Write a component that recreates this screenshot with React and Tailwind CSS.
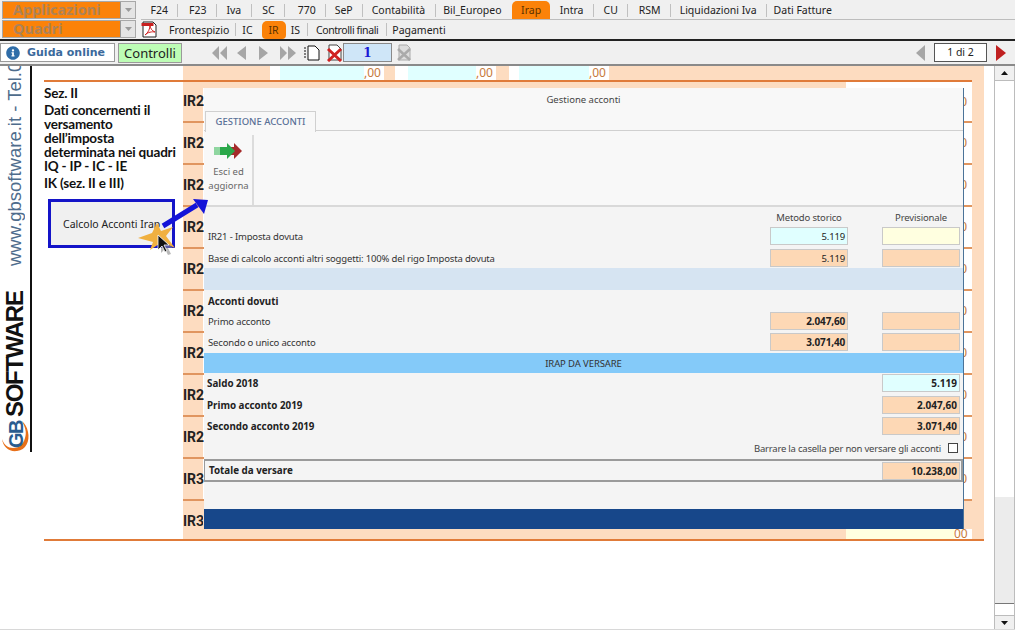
import { FaInfoCircle } from 'react-icons/fa';

const ui = { fontFamily: '"Noto Sans", sans-serif' };
const arial = { fontFamily: '"Liberation Sans", sans-serif' };
const roboto = { fontFamily: 'Roboto, sans-serif' };

const topTabs = [
  { label: 'F24', cls: '', sep: true },
  { label: 'F23', cls: 'ml-[1px]', sep: true },
  { label: 'Iva', cls: '', sep: true },
  { label: 'SC', cls: 'ml-[1px]', sep: true },
  { label: '770', cls: 'ml-[3px]', sep: true },
  { label: 'SeP', cls: '-ml-[1px]', sep: true },
  { label: 'Contabilità', cls: '-ml-[1px]', sep: true },
  { label: 'Bil_Europeo', cls: '-ml-[2px]' },
  { label: 'Irap', cls: 'ml-[1px]', active: true },
  { label: 'Intra', cls: '', sep: true },
  { label: 'CU', cls: '', sep: true },
  { label: 'RSM', cls: 'ml-[1px]', sep: true },
  { label: 'Liquidazioni Iva', cls: '-ml-[1px]', sep: true },
  { label: 'Dati Fatture', cls: '-ml-[3px]' },
];
const subTabs = [
  { label: 'Frontespizio', cls: 'pr-[6px] pl-[7px]', sep: true },
  { label: 'IC', cls: 'pr-[9px] pl-[6px]' },
  { label: 'IR', cls: 'rounded-t-[5px] rounded-b-[4px] bg-[#fb8209] px-[7px] text-[#5b3200]' },
  { label: 'IS', cls: 'pr-[7px] pl-[5px]', sep: true },
  { label: 'Controlli finali', cls: 'pr-[8px] pl-[8px] tracking-[-0.4px]', sep: true },
  { label: 'Pagamenti', cls: 'pl-[5px]' },
];
const sideLines = ['Dati concernenti il', 'versamento', 'dell’imposta', 'determinata nei quadri', 'IQ - IP - IC - IE'];
const rowLabels = ['IR21', 'IR22', 'IR23', 'IR24', 'IR25', 'IR26', 'IR27', 'IR28', 'IR29', 'IR30'];

function Combo({ label }) {
  return (
    <div className="flex h-[18px] w-[134px] border border-[#a8a8a8] bg-[#fb8209]">
      <span className="flex-1 pl-[10px] text-[14.5px] leading-[15px] font-bold text-[#ad8258]">{label}</span>
      <span className="flex w-[15px] items-center justify-center border-l border-[#999] bg-[#e4e4e4]">
        <svg width="7" height="4"><path d="M0 0h7L3.5 4z" fill="#9a9a9a" /></svg>
      </span>
    </div>
  );
}

function Field({ value = '', tone = 'peach', bold }) {
  const tones = { peach: 'bg-[#fdd8b5]', cyan: 'bg-[#e0ffff]', yellow: 'bg-[#ffffe0]' };
  return (
    <div className={`h-[18px] w-[78px] border border-[#c9c9c9] pr-[2px] text-right leading-[17px] text-[#222] ${tones[tone]} ${bold ? 'text-[10px] font-bold' : 'text-[9.5px]'}`}>
      {value}
    </div>
  );
}

function FormRow({ label, a, b, toneA, toneB, bold, className = '' }) {
  return (
    <div className={`flex h-[18px] items-center pr-[3px] pl-[4px] text-[9.5px] tracking-[-0.16px] text-[#333] ${className}`}>
      <span className="flex-1 pt-[2px]">{label}</span>
      <Field value={a} tone={toneA} bold={bold} />
      <div className="ml-[34px]">
        <Field value={b} tone={toneB} bold={bold} />
      </div>
    </div>
  );
}

function TotalRow({ label, value, tone, className = '' }) {
  return (
    <div className={`flex h-[18px] items-center pr-[3px] pl-[3px] text-[9.8px] font-bold text-[#222] ${className}`}>
      <span className="flex-1 pt-[2px]">{label}</span>
      <Field value={value} tone={tone} bold />
    </div>
  );
}

function Dialog() {
  return (
    <div className="absolute top-[22px] left-[172px] h-[441px] w-[760px] border-r border-[#4b7398] bg-[#f4f4f4]" style={ui}>
      <div className="bg-[#f8f8f8]">
        <div className="h-[23px] pt-[4px] text-center text-[9.5px] leading-[16px] text-[#444]">Gestione acconti</div>
        <div className="flex h-[20px] border-b border-[#d0d0d0]">
          <div className="ml-px h-[21px] w-[111px] border border-b-0 border-[#d0d0d0] bg-[#f8f8f8] text-center text-[9.5px] leading-[19px] font-medium text-[#5a7097]">
            GESTIONE ACCONTI
          </div>
        </div>
        <div className="flex h-[76px] border-b-2 border-[#d9d9d9] pt-[4px]">
          <div className="w-[50px] border-r-2 border-[#dcdcdc] pt-[8px] text-center text-[9.5px] leading-[14px] text-[#666]">
            <svg className="mx-auto" width="28" height="16" viewBox="0 0 28 16">
              <rect x="0" y="4" width="12" height="8" fill="#8fd6a0" />
              <path d="M18 0l8 8-8 8v-4h-8V4h8z" fill="#a52a2a" transform="translate(2 0)" />
              <path d="M13 0l8 8-8 8v-4H6V4h7z" fill="#2ba84a" />
            </svg>
            <div className="mt-[6px] pl-px">Esci ed<br />aggiorna</div>
          </div>
        </div>
      </div>

      <div className="flex h-[20px] items-center pt-[2px] pr-[3px] text-center text-[9.5px] tracking-[-0.16px] text-[#444]">
        <span className="ml-auto w-[78px]">Metodo storico</span>
        <span className="ml-[34px] w-[78px]">Previsionale</span>
      </div>
      <FormRow label="IR21 - Imposta dovuta" a="5.119" toneA="cyan" toneB="yellow" />
      <FormRow label="Base di calcolo acconti altri soggetti: 100% del rigo Imposta dovuta" a="5.119" className="mt-[4px]" />
      <div className="mt-[1px] h-[22px] bg-[#d6e4f2]" />
      <div className="h-[22px] pt-[4px] pl-[4px] text-[9.8px] leading-[16px] font-bold text-[#222]">Acconti dovuti</div>
      <FormRow label="Primo acconto" a="2.047,60" bold />
      <FormRow label="Secondo o unico acconto" a="3.071,40" bold className="mt-[3px]" />
      <div className="mt-[2px] h-[20px] bg-[#84caf9] pt-px text-center text-[9.5px] leading-[20px] tracking-[-0.1px] text-[#333]">IRAP DA VERSARE</div>
      <TotalRow label="Saldo 2018" value="5.119" tone="cyan" className="mt-[1px]" />
      <TotalRow label="Primo acconto 2019" value="2.047,60" className="mt-[4px]" />
      <TotalRow label="Secondo acconto 2019" value="3.071,40" className="mt-[3px]" />
      <div className="mt-[4px] flex h-[18px] items-center justify-end pr-[5px] text-[9.5px] tracking-[-0.22px] text-[#444]">
        <span className="pt-[2px]">Barrare la casella per non versare gli acconti</span>
        <span className="ml-[7px] h-[10px] w-[10px] border border-[#444] bg-white" />
      </div>
      <div className="mt-[2px] flex h-[23px] items-center border-y-2 border-r-2 border-l border-[#9a9a9a] pr-[1px] pl-[4px] text-[9.8px] font-bold text-[#222]">
        <span className="flex-1 pt-[2px]">Totale da versare</span>
        <Field value="10.238,00" bold />
      </div>
      <div className="mt-[27px] h-[20px] bg-[#17478a]" />
    </div>
  );
}

function NavIcons() {
  const grey = '#a6a6a6';
  return (
    <div className="ml-[29px] flex items-center">
      <svg width="132" height="18" viewBox="0 0 132 18">
        <path d="M8 2v14L1 9zM16 2v14L9 9zM35 2v14l-9-7zM48 2v14l9-7zM69 2v14l7-7zM77 2v14l8-7z" fill={grey} />
        <path d="M97 2h7l4 4v10H97z" fill="#fff" stroke="#111" />
        <path d="M93 4h2M93 7h2M93 10h2M93 13h2" stroke="#111" />
        <path d="M118 1h8l4 4v11h-12z" fill="#fff" stroke="#444" />
        <path d="M117 5l13 12M130 5l-13 12" stroke="#d02020" strokeWidth="3" />
      </svg>
      <div className="h-[19px] w-[49px] border border-[#8a8a8a] bg-[#cfe6f8] text-center text-[12px] leading-[19px] font-bold text-[#1a1ad6]" style={{ fontFamily: '"DejaVu Serif", serif' }}>1</div>
      <svg className="ml-[5px]" width="15" height="17" viewBox="0 0 15 17">
        <path d="M2 1h8l3 3v12H2z" fill="#ddd" stroke="#aaa" />
        <path d="M1 5l12 11M13 5L1 16" stroke="#aaa" strokeWidth="2.5" />
      </svg>
    </div>
  );
}

function Sidebar() {
  return (
    <div className="flex h-[386px] w-[32px] shrink-0 flex-col border-r-2 border-[#111]">
      <div className="h-[200px] shrink-0 rotate-180 overflow-hidden text-[18.5px] leading-[30px] whitespace-nowrap text-[#4e6c8c] [writing-mode:vertical-rl]" style={arial}>
        www.gbsoftware.it - Tel.0
      </div>
      <div className="mt-[24px] flex h-[127px] w-[30px] shrink-0 rotate-180 items-center justify-start text-[24px] leading-[30px] font-bold tracking-[-1.3px] whitespace-nowrap text-[#111] [writing-mode:vertical-rl]" style={arial}>
        SOFTWARE
      </div>
      <svg className="shrink-0" width="30" height="35" viewBox="0 0 30 35">
        <path d="M2 22c1 8 7 13 15 12 9-1 13-10 11-19-1-5-3-8-6-11 3 6 5 11 3 17-2 7-6 10-12 10-5 0-9-3-11-9z" fill="#e8701a" />
        <text transform="translate(23 31) rotate(-90)" fontSize="20" fontWeight="700" letterSpacing="-1.5" fill="#2a5c8f" style={arial}>GB</text>
      </svg>
    </div>
  );
}

function TopStrip() {
  return (
    <div className="flex h-[14px]">
      <div className="w-[139px] shrink-0" />
      <div className="flex flex-1 bg-[#fddcc0]">
        <div className="ml-[87px] w-[10px] bg-white" />
        <div className="w-[84px] bg-[#e0ffff]" />
        <div className="w-[20px] bg-white text-[12px] leading-[14px] text-[#c77a3c]">,00</div>
        <div className="ml-[11px] w-[13px] bg-white" />
        <div className="w-[68px] bg-[#e0ffff]" />
        <div className="w-[20px] bg-white text-[12px] leading-[14px] text-[#c77a3c]">,00</div>
        <div className="ml-[13px] w-[10px] bg-white" />
        <div className="w-[70px] bg-[#e0ffff]" />
        <div className="w-[20px] bg-white text-[12px] leading-[14px] text-[#c77a3c]">,00</div>
      </div>
    </div>
  );
}

function Pointer() {
  return (
    <svg className="pointer-events-none absolute top-[122px] left-[100px]" width="90" height="70" viewBox="0 0 90 70">
      <path d="M31 38L65 17" stroke="#1414d8" strokeWidth="5" />
      <path d="M76 12L61 11l11 15z" fill="#1414d8" />
      <path d="M6 50l14-5 5-10 4 8 12-4-7 9 9 12-13-6-12 8 3-8z" fill="#f0b040" />
      <path d="M29 50v15l4-4 3 6 3-1-3-6h5z" fill="#888" opacity="0.6" />
      <path d="M26 47v15l4-4 3 6 2-1-3-6h5z" fill="#111" stroke="#fff" strokeWidth="0.8" />
    </svg>
  );
}

function Form() {
  return (
    <div className="relative flex-1 pl-[12px]" style={ui}>
      <div className="w-[940px]">
        <TopStrip />
        <div className="flex">
          <div className="h-[2px] flex-1 bg-[#e07b39]" />
          <div className="w-[12px] bg-[#fddcc0]" />
        </div>
        <div className="flex">
          <div className="w-[139px] shrink-0">
            <div className="pt-[4px] text-[13.5px] leading-[14px] font-bold tracking-[-0.2px] whitespace-nowrap text-[#111]" style={{ fontFamily: 'Lato, sans-serif' }}>
              <div className="mb-[3px]">Sez. II</div>
              {sideLines.map((line) => <div key={line}>{line}</div>)}
              <div className="mt-[3px]">IK (sez. II e III)</div>
            </div>
            <div className="mt-[9px] ml-[4px] flex h-[49px] w-[127px] items-center border-[3px] border-[#1414c8] bg-[#f0f0f0] pt-[3px] pl-[12px] text-[10.5px] text-[#222]">
              Calcolo Acconti Irap
            </div>
          </div>
          <div className="flex flex-1">
            <div className="flex-1">
              <div className="h-[6px] w-[663px] bg-[#fddcc0]" />
              {rowLabels.map((label, i) => (
                <div key={label} className={`flex ${i === 0 ? 'h-[35px]' : 'h-[42px]'}`}>
                  <div className={`w-[20px] border-b-2 border-[#e0955f] bg-[#fddcc0] text-[14px] leading-[20px] font-bold whitespace-nowrap text-[#222] ${i === 0 ? 'pt-[3px]' : 'pt-[10px]'}`} style={roboto}>
                    {label}
                  </div>
                  <div className={`flex-1 border-b-2 border-[#e0955f] pr-[5px] text-right text-[12px] leading-[16px] text-[#c77a3c] ${i === 0 ? 'pt-[6px]' : 'pt-[12px]'}`}>,00</div>
                </div>
              ))}
              <div className="flex h-[38px]">
                <div className="w-[20px] bg-[#fddcc0] pt-[10px] text-[14px] leading-[20px] font-bold whitespace-nowrap text-[#222]" style={roboto}>IR31</div>
                <div className="flex flex-1 items-end bg-[#fddcc0]">
                  <div className="ml-auto h-[10px] w-[108px] bg-[#ffffe0]" />
                  <div className="h-[10px] w-[18px] bg-white pr-[5px] text-right text-[12px] leading-[10px] text-[#c77a3c]">00</div>
                </div>
              </div>
            </div>
            <div className="w-[12px] bg-[#fddcc0]" />
          </div>
        </div>
        <div className="h-[2px] bg-[#e07b39]" />
      </div>
      <Dialog />
      <Pointer />
    </div>
  );
}

function ScrollBar() {
  return (
    <div className="flex w-[21px] shrink-0 flex-col border-x border-[#bcbcbc]">
      <div className="flex h-[15px] items-center justify-center border-b border-[#bcbcbc] bg-[#f0f0f0]">
        <svg width="7" height="4"><path d="M0 4h7L3.5 0z" fill="#111" /></svg>
      </div>
      <div className="h-[416px] bg-white" />
      <div className="h-[106px] bg-[#ececec]" />
      <div className="h-[12px] border-t border-[#777] bg-white" />
      <div className="flex h-[14px] items-center justify-center border-t border-[#bcbcbc] bg-[#f0f0f0]">
        <svg width="7" height="4"><path d="M0 0h7L3.5 4z" fill="#111" /></svg>
      </div>
    </div>
  );
}

export default function App() {
  return (
    <div className="flex h-[630px] w-[1015px] flex-col overflow-hidden border-b border-[#d8d8d8] bg-white text-[10.5px] text-[#222]" style={ui}>
      <div className="h-[39px] shrink-0 bg-[#f0f0f0]">
        <div className="flex h-[20px] pt-[1px] pl-[2px]">
          <Combo label="Applicazioni" />
          <div className="ml-[5px] flex flex-1 items-center border-b border-[#bdbdbd] leading-[18px]">
            {topTabs.map((t) => (
              <div key={t.label} className={`flex items-center ${t.cls}`}>
                <span className={t.active ? 'rounded-t-[5px] bg-[#fb8209] px-[9px] text-[#5b3200]' : 'px-[9.5px]'}>{t.label}</span>
                {t.sep && <span className="h-[13px] w-px bg-[#c0c0c0]" />}
              </div>
            ))}
          </div>
        </div>
        <div className="flex h-[19px] pl-[2px]">
          <Combo label="Quadri" />
          <svg className="mt-[1px] ml-[5px]" width="17" height="17" viewBox="0 0 17 17">
            <path d="M2 1h10l3 3v12H2z" fill="#fff" stroke="#222" />
            <rect x="0.5" y="2" width="12" height="3" fill="#c82020" />
            <path d="M4 14c3-2 5-6 5-10 0 3 2 6 5 7-3-.5-7 0-10 3z" fill="none" stroke="#d02020" />
          </svg>
          <div className="ml-[4px] flex items-center leading-[18px]">
            {subTabs.map((t) => (
              <div key={t.label} className="flex items-center">
                <span className={t.cls}>{t.label}</span>
                {t.sep && <span className="h-[13px] w-px bg-[#c0c0c0]" />}
              </div>
            ))}
          </div>
        </div>
      </div>
      <div className="h-[2px] shrink-0 bg-[#222]" />
      <div className="flex h-[25px] shrink-0 items-center border-b-2 border-[#8a8a8a] bg-[#f0f0f0]">
        <div className="flex h-[19px] w-[115px] items-center border border-[#9a9a9a] bg-white pl-[5px] text-[11px] font-bold text-[#3b6a9c]" style={{ fontFamily: '"DejaVu Sans", sans-serif' }}>
          <FaInfoCircle className="mr-[7px] shrink-0 text-[#2f6da8]" size={14} />
          <span className="pt-[1px] whitespace-nowrap">Guida online</span>
        </div>
        <div className="ml-[3px] h-[20px] w-[64px] border border-[#9a9a9a] bg-[#bdfdb5] text-center text-[13px] leading-[18px] text-[#222]">Controlli</div>
        <NavIcons />
        <svg className="ml-auto" width="10" height="16" viewBox="0 0 10 16"><path d="M9 0v16L0 8z" fill="#a6a6a6" /></svg>
        <div className="ml-[8px] h-[19px] w-[53px] border border-[#555] bg-white text-center text-[10.5px] leading-[17px]">1 di 2</div>
        <svg className="mr-[9px] ml-[9px]" width="10" height="16" viewBox="0 0 10 16"><path d="M0 0l10 8-10 8z" fill="#c02020" /></svg>
      </div>
      <div className="flex flex-1">
        <Sidebar />
        <Form />
        <ScrollBar />
      </div>
    </div>
  );
}
